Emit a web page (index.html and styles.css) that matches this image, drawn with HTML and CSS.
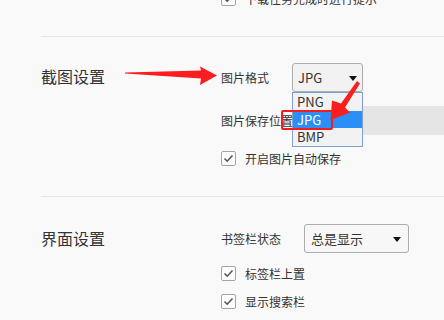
FILE: index.html
```html
<!DOCTYPE html>
<html>
<head>
<meta charset="utf-8">
<link rel="stylesheet" href="styles.css">
</head>
<body>
<div class="page">
  <div class="section top">
    <div class="cut-row">
      <span class="check"><svg viewBox="0 0 15 15" width="15" height="15"><path d="M3.5 7.5 L6.2 10.2 L11.5 4.5" fill="none" stroke="#555" stroke-width="1.6"/></svg></span>
      <span class="ctext">下载任务完成时进行提示</span>
    </div>
  </div>

  <div class="section shot">
    <div class="title t1">截图设置</div>
    <div class="rows">
      <div class="row r1">
        <span class="label">图片格式</span>
        <div class="select s1">
          <span class="val">JPG</span>
          <span class="tri"></span>
          <ul class="list">
            <li>PNG</li>
            <li class="sel">JPG</li>
            <li>BMP</li>
          </ul>
        </div>
      </div>
      <div class="row r2">
        <span class="label">图片保存位置</span>
        <div class="input"></div>
      </div>
      <div class="crow r3">
        <span class="check"><svg viewBox="0 0 15 15" width="15" height="15"><path d="M3.5 7.5 L6.2 10.2 L11.5 4.5" fill="none" stroke="#555" stroke-width="1.6"/></svg></span>
        <span class="ctext">开启图片自动保存</span>
      </div>
    </div>
  </div>

  <div class="section ui">
    <div class="title t2">界面设置</div>
    <div class="rows">
      <div class="row q1">
        <span class="label">书签栏状态</span>
        <div class="select s2">
          <span class="val">总是显示</span>
          <span class="tri"></span>
        </div>
      </div>
      <div class="crow q2">
        <span class="check"><svg viewBox="0 0 15 15" width="15" height="15"><path d="M3.5 7.5 L6.2 10.2 L11.5 4.5" fill="none" stroke="#555" stroke-width="1.6"/></svg></span>
        <span class="ctext">标签栏上置</span>
      </div>
      <div class="crow q3">
        <span class="check"><svg viewBox="0 0 15 15" width="15" height="15"><path d="M3.5 7.5 L6.2 10.2 L11.5 4.5" fill="none" stroke="#555" stroke-width="1.6"/></svg></span>
        <span class="ctext">显示搜索栏</span>
      </div>
    </div>
  </div>

  <div class="marks">
    <div class="hl-box"></div>
    <svg class="arrows" width="444" height="320" viewBox="0 0 444 320">
      <polygon points="125,72.4 201,70.5 200,66.5 217,75.5 200,85 201,78.5 125,73.6" fill="#fa1e1e"/>
      <polygon points="357,81 341,103.5 332,100.5 330.5,120 350,112.5 345,107.5 360,83.5" fill="#fa1e1e"/>
    </svg>
  </div>
</div>
</body>
</html>
```
FILE: styles.css
```css
html, body {
  margin: 0;
  padding: 0;
}
body {
  width: 444px;
  height: 320px;
  overflow: hidden;
  background: #f9f9f9;
  font-family: "Noto Sans CJK SC", "Noto Sans", sans-serif;
  color: #333;
}
.page {
  position: relative;
  width: 444px;
  height: 320px;
  overflow: hidden;
}
.section {
  margin-left: 41px;
  display: flex;
  border-bottom: 1px solid #e6e6e6;
}
.top {
  height: 37px;
  padding-left: 180px;
  box-sizing: border-box;
}
.cut-row {
  display: flex;
  align-items: center;
  height: 15px;
  margin-top: -9px;
}
.title {
  width: 180px;
  flex: none;
  font-size: 16px;
  line-height: 29px;
  height: 29px;
  color: #333;
}
.t1 { margin-top: 25px; }
.t2 { margin-top: 27px; }
.rows {
  display: flex;
  flex-direction: column;
  flex: 1;
}
.shot { height: 160px; box-sizing: border-box; }
.ui { border-bottom: none; }
.row {
  display: flex;
  align-items: center;
  height: 29px;
}
.r1 { margin-top: 26px; }
.r2 { margin-top: 14px; }
.r3 { margin-top: 16px; }
.q1 { margin-top: 27px; }
.q2 { margin-top: 13px; }
.q3 { margin-top: 13px; }
.label {
  font-size: 12px;
  margin-right: 23px;
  white-space: nowrap;
  color: #333;
}
.select {
  position: relative;
  height: 29px;
  box-sizing: border-box;
  border: 1px solid #acacac;
  border-radius: 3px;
  background: #f2f2f2;
  display: flex;
  align-items: center;
}
.s1 { width: 71px; }
.s2 { width: 105px; background: #f7f7f7; }
.val {
  font-size: 13px;
  padding-left: 5px;
  color: #333;
}
.s2 .val { padding-left: 6px; font-size: 13px; }
.tri {
  position: absolute;
  right: 5px;
  top: 12px;
  width: 0;
  height: 0;
  border-left: 4px solid transparent;
  border-right: 4px solid transparent;
  border-top: 5px solid #111;
}
.s2 .tri { right: 7px; }
.list {
  position: absolute;
  left: -1px;
  top: 28px;
  width: 71px;
  margin: 0;
  padding: 0;
  list-style: none;
  box-sizing: border-box;
  border: 1px solid #7f9ed6;
  background: #f2f2f2;
  z-index: 5;
}
.list li {
  height: 17.6px;
  line-height: 17.6px;
  font-size: 13px;
  padding-left: 4px;
  color: #333;
}
.list li.sel {
  background: #2b8ff7;
  color: #fff;
}
.input {
  width: 200px;
  height: 29px;
  background: #e5e5e5;
  flex: none;
}
.crow {
  display: flex;
  align-items: center;
  height: 15px;
}
.check {
  width: 15px;
  height: 15px;
  box-sizing: border-box;
  border: 1px solid #a3a3a3;
  border-radius: 2px;
  background: #fdfdfd;
  flex: none;
  display: flex;
  align-items: center;
  justify-content: center;
}
.check svg { display: block; margin: -1px; }
.ctext {
  font-size: 12px;
  margin-left: 9px;
  color: #333;
  white-space: nowrap;
}
.marks {
  position: absolute;
  left: 0;
  top: 0;
  width: 444px;
  height: 320px;
  pointer-events: none;
  z-index: 10;
}
.hl-box {
  position: absolute;
  left: 281px;
  top: 110px;
  width: 52px;
  height: 20px;
  box-sizing: border-box;
  border: 2.5px solid #f51c1c;
  border-radius: 2px;
}
.arrows {
  position: absolute;
  left: 0;
  top: 0;
}
```
